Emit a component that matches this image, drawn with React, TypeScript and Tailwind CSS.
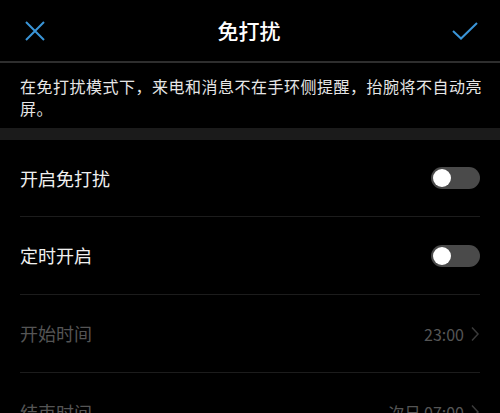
import React from "react";

const font = { fontFamily: '"Noto Sans CJK SC", "Noto Sans", sans-serif' };

function Toggle() {
  return (
    <div className="w-[49px] h-[22px] rounded-full bg-[#4a4a4a] flex items-center pl-[2px]">
      <div className="w-[18px] h-[18px] rounded-full bg-white" />
    </div>
  );
}

function Chevron() {
  return (
    <svg width="10" height="16" viewBox="0 0 10 16" fill="none">
      <path d="M2 1.5 L8 8 L2 14.5" stroke="#3a3a3a" strokeWidth="1.5" />
    </svg>
  );
}

export default function App() {
  return (
    <div className="w-[500px] h-[413px] bg-black overflow-hidden" style={font}>
      {/* Header */}
      <header className="h-[63px] flex items-center justify-between px-[24px] border-b-2 border-[#2e2e2e]">
        <svg width="22" height="22" viewBox="0 0 22 22" fill="none">
          <path d="M2 2 L20 20 M20 2 L2 20" stroke="#3a95d8" strokeWidth="2" />
        </svg>
        <h1 className="text-[21px] text-white font-medium">免打扰</h1>
        <svg width="26" height="18" viewBox="0 0 26 18" fill="none" className="mr-[-2px]">
          <path d="M1 9 L9 16.5 L25 1" stroke="#3a95d8" strokeWidth="2" />
        </svg>
      </header>

      {/* Description */}
      <p className="pl-[20px] pr-[10px] pt-[12px] pb-[9px] text-[16px] tracking-[0.5px] leading-[22px] text-[#e6e6e6]">
        在免打扰模式下，来电和消息不在手环侧提醒，抬腕将不自动亮屏。
      </p>
      <div className="h-[12px] bg-[#1b1b1b]" />

      {/* Rows */}
      <div className="px-[20px]">
        <div className="h-[77px] flex items-center justify-between border-b border-[#1c1c1c]">
          <span className="text-[18px] text-[#f0f0f0]">开启免打扰</span>
          <Toggle />
        </div>
        <div className="h-[78px] flex items-center justify-between border-b border-[#1c1c1c]">
          <span className="text-[18px] text-[#f0f0f0]">定时开启</span>
          <Toggle />
        </div>
        <div className="h-[78px] flex items-center justify-between border-b border-[#1c1c1c]">
          <span className="text-[18px] text-[#555555]">开始时间</span>
          <div className="flex items-center gap-[6px]">
            <span className="text-[16px] text-[#555555]">23:00</span>
            <Chevron />
          </div>
        </div>
        <div className="h-[78px] flex items-center justify-between">
          <span className="text-[18px] text-[#555555]">结束时间</span>
          <div className="flex items-center gap-[6px]">
            <span className="text-[16px] text-[#555555]">次日 07:00</span>
            <Chevron />
          </div>
        </div>
      </div>
    </div>
  );
}
